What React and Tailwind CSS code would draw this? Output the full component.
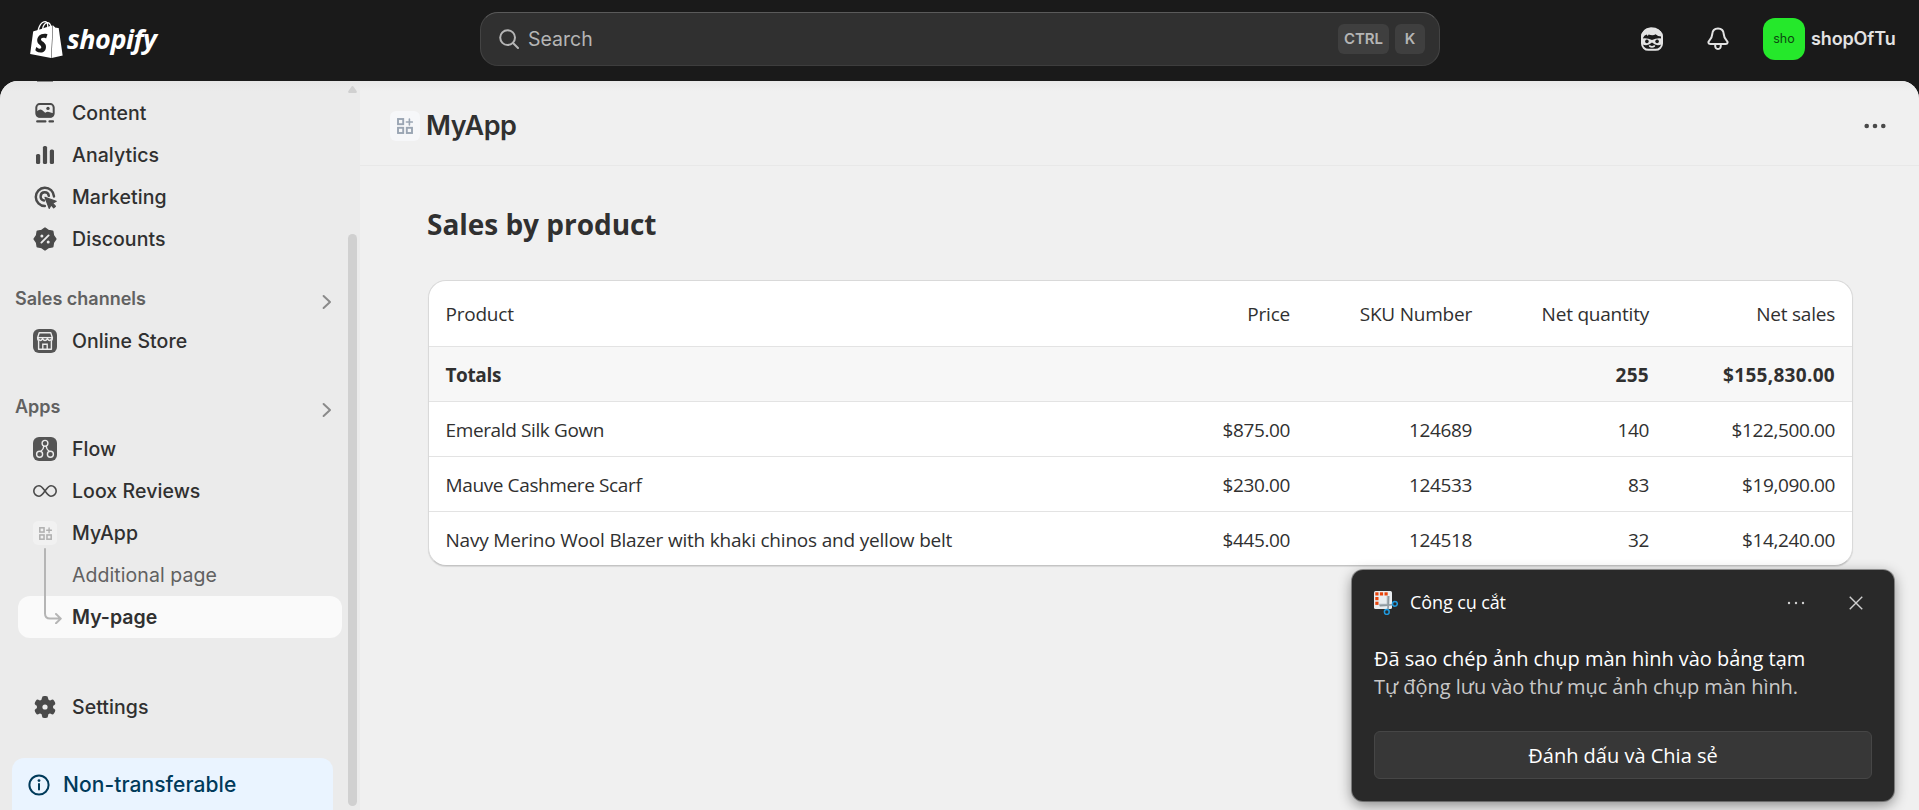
import { SiShopify } from "react-icons/si";

const INK = "#4a4a4a";

function ContentIcon() {
  return (
    <svg className="size-[30px]" viewBox="0 0 30 30" fill="none">
      <rect x="6.3" y="6.1" width="17.4" height="12.6" rx="3.4" stroke={INK} strokeWidth="2" />
      <path d="M6 14 L8.8 12 Q10.4 10.8 12 12 L15.2 14.8 L16.6 14 Q17.8 13.4 19 14 L24 15.6 Q24 19.6 20.4 19.6 H9.6 Q6 19.6 6 15.2Z" fill={INK} />
      <circle cx="18" cy="10.4" r="1.7" fill={INK} />
      <path d="M7.2 23.4H15.4M19.5 23.4H23" stroke={INK} strokeWidth="2.2" strokeLinecap="round" />
    </svg>
  );
}

function AnalyticsIcon() {
  return (
    <svg className="size-[30px]" viewBox="0 0 30 30" fill={INK}>
      <rect x="6" y="14" width="4.2" height="10" rx="1.6" />
      <rect x="12.9" y="6" width="4.2" height="18" rx="1.6" />
      <rect x="19.8" y="9.5" width="4.2" height="14.5" rx="1.6" />
    </svg>
  );
}

function MarketingIcon() {
  return (
    <svg className="size-[30px]" viewBox="0 0 30 30" fill="none">
      <path d="M24 14.4A9.1 9.1 0 1 0 14.8 24" stroke={INK} strokeWidth="2.5" strokeLinecap="round" />
      <path d="M18.8 13.8A4.1 4.1 0 1 0 14 18.4" stroke={INK} strokeWidth="2.5" strokeLinecap="round" />
      <path d="M15 15.4 L26.2 19.2 L22.6 21.2 L25.4 24.2 L23.7 25.8 L21 22.9 L19.2 26.4Z" fill={INK} stroke={INK} strokeWidth="1.2" strokeLinejoin="round" />
    </svg>
  );
}

function DiscountsIcon() {
  return (
    <svg className="size-[30px]" viewBox="0 0 30 30">
      <path
        d="M15 4.4 L18.4 6.8 L22.5 7.5 L23.2 11.6 L25.6 15 L23.2 18.4 L22.5 22.5 L18.4 23.2 L15 25.6 L11.6 23.2 L7.5 22.5 L6.8 18.4 L4.4 15 L6.8 11.6 L7.5 7.5 L11.6 6.8Z"
        fill={INK}
        stroke={INK}
        strokeWidth="2"
        strokeLinejoin="round"
      />
      <path d="M11.4 18.6 L18.6 11.4" stroke="#ebebeb" strokeWidth="1.9" strokeLinecap="round" />
      <circle cx="11.9" cy="12" r="1.5" fill="#ebebeb" />
      <circle cx="18.2" cy="18.1" r="1.5" fill="#ebebeb" />
    </svg>
  );
}

function StoreIcon() {
  return (
    <svg className="size-6" viewBox="0 0 24 24" fill="none">
      <rect width="24" height="24" rx="6" fill="#555" />
      <path d="M6.2 3.7H17.8L19.4 8.8Q19.4 11.4 18.4 11.8V20.2H5.6V11.8Q4.6 11.4 4.6 8.8Z" stroke="#ebebeb" strokeWidth="1.4" strokeLinejoin="round" />
      <path d="M4.8 8.6H19.2" stroke="#ebebeb" strokeWidth="1.3" />
      <path d="M5 9.4Q7.2 13.4 9.6 9.6Q12 13.4 14.4 9.6Q16.8 13.4 19 9.4" stroke="#ebebeb" strokeWidth="1.6" />
      <path d="M9.8 20V15.2H14.2V20" stroke="#ebebeb" strokeWidth="1.4" />
    </svg>
  );
}

function FlowIcon() {
  return (
    <svg className="size-6" viewBox="0 0 24 24" fill="none">
      <rect width="24" height="24" rx="6" fill="#555" />
      <g stroke="#ebebeb" strokeWidth="1.4">
        <circle cx="12" cy="6.3" r="2.9" />
        <circle cx="6.6" cy="17.2" r="3" />
        <circle cx="17.4" cy="17.2" r="3" />
        <path d="M10.9 9 Q10.6 12.2 7.8 14.4M13.1 9 Q13.4 12.2 16.2 14.4" />
      </g>
    </svg>
  );
}

function LooxIcon() {
  return (
    <svg className="size-6" viewBox="0 0 24 24" fill="none" stroke="#4a4a4a" strokeWidth="1.6">
      <path d="M12 12 C9.6 9 8.4 6.8 6 6.8 A5.2 5.2 0 0 0 6 17.2 C8.4 17.2 9.6 15 12 12 C14.4 9 15.6 6.8 18 6.8 A5.2 5.2 0 0 1 18 17.2 C15.6 17.2 14.4 15 12 12Z" />
    </svg>
  );
}

function AppGlyph({ className }) {
  return (
    <svg className={className} viewBox="0 0 16 16" fill="none" stroke="currentColor" strokeWidth="1.9">
      <rect x="1" y="1" width="5.2" height="5.2" />
      <rect x="1" y="9.8" width="5.2" height="5.2" />
      <rect x="9.8" y="9.8" width="5.2" height="5.2" />
      <path d="M12.4 1V7M9.4 4H15.4" strokeWidth="1.6" strokeLinecap="round" />
    </svg>
  );
}

function GearIcon() {
  return (
    <svg className="size-[30px]" viewBox="0 0 30 30">
      <g fill={INK}>
        <circle cx="15" cy="15" r="8.2" />
        <rect x="11.9" y="4" width="6.2" height="22" rx="2.2" />
        <rect x="11.9" y="4" width="6.2" height="22" rx="2.2" transform="rotate(60 15 15)" />
        <rect x="11.9" y="4" width="6.2" height="22" rx="2.2" transform="rotate(120 15 15)" />
      </g>
      <circle cx="15" cy="15" r="2.6" fill="#ebebeb" />
    </svg>
  );
}

function SidekickIcon() {
  return (
    <svg className="size-6" viewBox="0 0 24 24" fill="none">
      <rect x="2" y="3.2" width="20" height="19.6" rx="6.4" stroke="#e3e3e3" strokeWidth="2" />
      <path d="M1.4 11 Q1 1 11 .2 Q21 .2 22.6 9.4 Q18 9.8 15.6 7.2 Q13 9 8.6 7.4 L7.8 9 L6.6 7.6 Q4 8.6 3 11Z" fill="#e3e3e3" />
      <path d="M2 11.6 Q7 10.6 12 13 Q17 10.6 22 11.6 V17 Q17 20 12 15.6 Q7 20 2 17Z" fill="#e3e3e3" />
      <circle cx="6.9" cy="14.4" r="1.8" fill="#1a1a1a" />
      <circle cx="17.1" cy="14.4" r="1.8" fill="#1a1a1a" />
      <path d="M9.6 19 Q12 20.8 14.4 19" stroke="#e3e3e3" strokeWidth="1.6" strokeLinecap="round" />
    </svg>
  );
}

function BellIcon() {
  return (
    <svg className="size-6" viewBox="0 0 24 24" fill="none" stroke="#e3e3e3" strokeWidth="2" strokeLinejoin="round">
      <path d="M12 1.6 C8.4 1.6 6.4 4 6.2 7.4 C6 10.6 5.4 11.6 3.4 13.4 C1.6 15 2.2 17 4.4 17 H19.6 C21.8 17 22.4 15 20.6 13.4 C18.6 11.6 18 10.6 17.8 7.4 C17.6 4 15.6 1.6 12 1.6Z" />
      <path d="M9.2 18 Q9 22 12 22 Q15 22 14.8 18" />
    </svg>
  );
}

function SnipIcon() {
  return (
    <svg className="size-6" viewBox="0 0 24 24" fill="none">
      <rect width="18" height="18" rx="1.6" fill="#e9edf0" />
      <path d="M14 5V14H5" stroke="#b4bcc2" strokeWidth="2.6" />
      <g fill="#e8430a">
        <rect x="1.3" y="1.3" width="3.2" height="3.2" />
        <rect x="5.9" y="1.3" width="3.2" height="3.2" />
        <rect x="10.5" y="1.3" width="3.2" height="3.2" />
        <rect x="1.3" y="6" width="3.2" height="3.2" />
        <rect x="1.3" y="10.7" width="3.2" height="3.2" />
      </g>
      <path d="M14.6 5L14 18.4M6 14.6L18.4 13.8" stroke="#8f999f" strokeWidth="1.6" />
      <circle cx="20.9" cy="12.8" r="2.4" stroke="#1f9be0" strokeWidth="1.5" />
      <circle cx="12.8" cy="21" r="2.4" stroke="#1f9be0" strokeWidth="1.5" />
    </svg>
  );
}

function NavItem({ icon, children }) {
  return (
    <div className="flex h-[42px] items-center pl-[30px]">
      <span className="flex w-[30px] justify-center">{icon}</span>
      <span className="ml-3 pt-0.5 text-[19.5px] font-medium tracking-[0.07px] text-[#303030]">{children}</span>
    </div>
  );
}

function SectionHeader({ children, className }) {
  return (
    <div className={"flex h-[42px] items-center justify-between pl-[15px] pr-[28px] " + className}>
      <span className="pb-0.5 text-[18px] font-semibold text-[#616161]">{children}</span>
      <svg className="mt-[6px] h-4 w-[10px]" viewBox="0 0 10 16" fill="none" stroke="#8a8a8a" strokeWidth="2" strokeLinecap="round" strokeLinejoin="round">
        <path d="M1.6 2L8 8L1.6 14" />
      </svg>
    </div>
  );
}

function Sidebar() {
  return (
    <aside className="relative w-[360px] shrink-0 overflow-hidden bg-[linear-gradient(#e6e6e6,#ebebeb_10px)]">
      <div className="ml-[37px] h-[11px]">
        <div className="h-px w-4 bg-[#8a8a8a]" />
      </div>
      <NavItem icon={<ContentIcon />}>Content</NavItem>
      <NavItem icon={<AnalyticsIcon />}>Analytics</NavItem>
      <NavItem icon={<MarketingIcon />}>Marketing</NavItem>
      <NavItem icon={<DiscountsIcon />}>Discounts</NavItem>
      <SectionHeader className="mt-[18px]">Sales channels</SectionHeader>
      <NavItem icon={<StoreIcon />}>Online Store</NavItem>
      <SectionHeader className="mt-6">Apps</SectionHeader>
      <NavItem icon={<FlowIcon />}>Flow</NavItem>
      <NavItem icon={<LooxIcon />}>Loox Reviews</NavItem>
      <NavItem
        icon={
          <span className="flex size-6 items-center justify-center rounded-[5px] bg-[#f1f1f1]">
            <AppGlyph className="size-[13px] text-[#b0b0b0]" />
          </span>
        }
      >
        MyApp
      </NavItem>
      <div className="relative">
        <div className="flex h-[42px] items-center pl-[72px]">
          <span className="pt-0.5 text-[19.5px] tracking-[0.07px] text-[#616161]">Additional page</span>
        </div>
        <div className="ml-[18px] flex h-[42px] w-[324px] items-center rounded-xl bg-[#fafafa] pl-[54px]">
          <span className="pt-0.5 text-[19.5px] font-semibold text-[#303030]">My-page</span>
        </div>
        <svg className="absolute left-[43px] top-[-6px] h-[76px] w-5" viewBox="0 0 20 76" fill="none" stroke="#b5b5b5" strokeWidth="2" strokeLinecap="round" strokeLinejoin="round">
          <path d="M2 1V65.5Q2 70.6 7 70.6H17.6M13 66L17.8 70.6L13 75.2" />
        </svg>
      </div>
      <div className="h-12" />
      <NavItem icon={<GearIcon />}>Settings</NavItem>
      <div className="ml-3 mt-[30px] flex h-[80px] w-[321px] rounded-xl bg-[#eaf4ff] pl-4 pt-[15px] text-[#003a5a]">
        <svg className="mt-px size-[22px]" viewBox="0 0 22 22" fill="none" stroke="currentColor" strokeWidth="2">
          <circle cx="11" cy="11" r="9.6" />
          <path d="M11 10V15.6" strokeLinecap="round" />
          <circle cx="11" cy="6.6" r="1.4" fill="currentColor" stroke="none" />
        </svg>
        <span className="ml-[13px] text-[21px] leading-6 font-medium tracking-[0.07px]">Non-transferable</span>
      </div>
      <div className="absolute left-[348px] top-0 flex h-full w-[9px] flex-col items-center">
        <svg className="mt-[5px] h-[7px] w-[9px]" viewBox="0 0 9 7" fill="#d0d0d0">
          <path d="M4.5 0Q5.2 0 5.8 1L8.6 5Q9.4 7 7.6 7H1.4Q-.4 7 .4 5L3.2 1Q3.8 0 4.5 0Z" />
        </svg>
        <div className="mt-[141px] h-[572px] w-[9px] rounded-full bg-[#d0d0d0]" />
      </div>
    </aside>
  );
}

function TopBar() {
  return (
    <header className="flex h-[81px] shrink-0 items-start">
      <div className="flex w-[480px] items-start pl-[28px] pt-[20px] text-white">
        <SiShopify className="mt-px size-[37px]" />
        <span className="ml-[2px] font-['Open_Sans',sans-serif] text-[27px] leading-[38px] font-bold tracking-[-0.5px] italic">shopify</span>
      </div>
      <div className="mt-3 flex h-[54px] w-[960px] items-center rounded-[18px] border border-x-[#444] border-t-[#5a5a5a] border-b-[#3d3d3d] bg-[#303030] pr-[14px] pl-[18px]">
        <svg className="size-5" viewBox="0 0 20 20" fill="none" stroke="#b5b5b5" strokeWidth="2" strokeLinecap="round">
          <circle cx="8.6" cy="8.6" r="7.4" />
          <path d="M14 14L19 19" />
        </svg>
        <span className="ml-[9px] pt-0.5 text-[19.5px] text-[#b5b5b5]">Search</span>
        <div className="ml-auto flex gap-[6px] text-[15px] font-semibold text-[#b5b5b5]">
          <span className="flex h-[30px] w-[51px] items-center justify-center rounded-md bg-[#3f3f3f]">CTRL</span>
          <span className="flex h-[30px] w-[30px] items-center justify-center rounded-md bg-[#3f3f3f]">K</span>
        </div>
      </div>
      <div className="mt-[18px] ml-[200px] flex h-[42px] items-center">
        <SidekickIcon />
        <span className="ml-[42px]"><BellIcon /></span>
        <span className="ml-[33px] flex size-[42px] items-center justify-center rounded-xl bg-[#25e82b] text-[12.5px] text-[#0c4a10]">sho</span>
        <span className="ml-[6px] pb-px text-[18px] font-semibold tracking-[-0.12px] text-[#e3e3e3]">shopOfTu</span>
      </div>
    </header>
  );
}

const rows = [
  ["Emerald Silk Gown", "$875.00", "124689", "140", "$122,500.00"],
  ["Mauve Cashmere Scarf", "$230.00", "124533", "83", "$19,090.00"],
  ["Navy Merino Wool Blazer with khaki chinos and yellow belt", "$445.00", "124518", "32", "$14,240.00"],
];

function Row({ cells, className }) {
  return (
    <div className={"grid grid-cols-[1fr_182px_182px_177px_186px] items-center pt-0.5 pr-[17px] pl-[16.5px] text-right " + className}>
      {cells.map((cell, i) => (
        <span key={i} className={i === 0 ? "-mr-[140px] text-left" : ""}>{cell}</span>
      ))}
    </div>
  );
}

function SalesTable() {
  return (
    <div className="mt-[36px] ml-[68px] w-[1425px] overflow-hidden rounded-[18px] border border-[#d9d9d9] border-b-[#c4c4c4] bg-white font-['Open_Sans','Noto_Sans',sans-serif] text-[19px] tracking-[-0.38px] text-[#303030] shadow-[0_1px_1px_rgba(0,0,0,0.1)]">
      <Row cells={["Product", "Price", "SKU Number", "Net quantity", "Net sales"]} className="h-[65px] tracking-[-0.22px]" />
      <Row cells={["Totals", "", "", "255", "$155,830.00"]} className="h-[55px] border-t border-[#e3e3e3] bg-[#f7f7f7] font-bold [&>span:not(:first-child)]:tracking-[0.3px]" />
      {rows.map((r) => (
        <Row key={r[0]} cells={r} className="h-[55px] border-t border-[#e3e3e3] last:h-[54px] last:pt-[3px] last:[&>span:first-child]:tracking-[-0.2px]" />
      ))}
    </div>
  );
}

function Toast() {
  return (
    <div className="absolute top-[570px] left-[1352px] flex h-[231px] w-[542px] flex-col rounded-[11px] bg-[#292929] px-[22px] pt-[21px] font-['Open_Sans','Noto_Sans',sans-serif] text-white shadow-[0_0_0_1px_rgba(0,0,0,0.35),0_4px_14px_rgba(0,0,0,0.45)]">
      <div className="flex h-6 items-center">
        <SnipIcon />
        <span className="-mt-[2px] ml-3 text-[18px] tracking-[-0.1px]">Công cụ cắt</span>
        <svg className="mr-[44px] ml-auto h-1 w-[18px]" viewBox="0 0 18 4" fill="#d0d0d0">
          <circle cx="2" cy="2" r="1.2" />
          <circle cx="9" cy="2" r="1.2" />
          <circle cx="16" cy="2" r="1.2" />
        </svg>
        <svg className="mr-[9px] size-[14px]" viewBox="0 0 15 15" stroke="#d0d0d0" strokeWidth="1.5">
          <path d="M.8.8L14.2 14.2M14.2.8L.8 14.2" />
        </svg>
      </div>
      <p className="mt-[30px] text-[20px] leading-7 tracking-[-0.03px]">Đã sao chép ảnh chụp màn hình vào bảng tạm</p>
      <p className="text-[20px] leading-7 tracking-[-0.05px] text-[#c8c8c8]">Tự động lưu vào thư mục ảnh chụp màn hình.</p>
      <div className="mt-[30px] flex h-12 items-center justify-center rounded-md border border-[#464646] bg-[#373737] pt-0.5 text-[20px]">Đánh dấu và Chia sẻ</div>
    </div>
  );
}

export default function App() {
  return (
    <div className="relative flex h-[810px] w-full flex-col overflow-hidden bg-[#1a1a1a] font-['Inter',sans-serif]">
      <TopBar />
      <div className="flex min-h-0 flex-1 overflow-hidden rounded-t-[18px] bg-[#f0f0f0]">
        <Sidebar />
        <main className="min-w-0 flex-1">
          <div className="flex h-[85px] items-center border-b border-[#e8e8e8] bg-[linear-gradient(#e9e9e9,#f0f0f0_10px)] pr-[33px] pl-[30px]">
            <span className="mt-[5px] flex size-[30px] items-center justify-center rounded-md bg-[#f6f7f9]">
              <AppGlyph className="size-4 text-[#9aa5b3]" />
            </span>
            <h1 className="mt-[7px] ml-[6px] text-[27px] font-semibold tracking-[-0.4px] text-[#303030]">MyApp</h1>
            <svg className="mt-[5px] ml-auto h-[6px] w-[22px]" viewBox="0 0 22 6" fill="#4a4a4a">
              <circle cx="2.7" cy="3" r="2.3" />
              <circle cx="11" cy="3" r="2.3" />
              <circle cx="19.3" cy="3" r="2.3" />
            </svg>
          </div>
          <h2 className="mt-[38px] ml-[67px] font-['Open_Sans',sans-serif] text-[28px] leading-10 font-bold tracking-[-0.03px] text-[#303030]">Sales by product</h2>
          <SalesTable />
        </main>
      </div>
      <Toast />
    </div>
  );
}
